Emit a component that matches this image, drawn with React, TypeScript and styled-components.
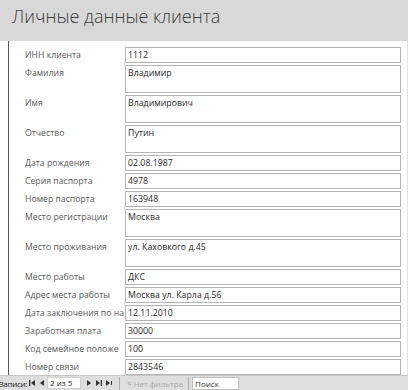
import styled, { createGlobalStyle } from 'styled-components';

const GlobalStyle = createGlobalStyle`
	html, body {
		margin: 0;
		padding: 0;
		width: 408px;
		height: 390px;
		overflow: hidden;
		background: #fff;
		font-family: 'Open Sans', 'Noto Sans', sans-serif;
	}
`;

interface IField {
	label: string;
	value: string;
	tall?: boolean;
}

// labels are cut by the column as in the form view
const fields: IField[] = [
	{ label: 'ИНН клиента', value: '1112' },
	{ label: 'Фамилия', value: 'Владимир', tall: true },
	{ label: 'Имя', value: 'Владимирович', tall: true },
	{ label: 'Отчество', value: 'Путин', tall: true },
	{ label: 'Дата рождения', value: '02.08.1987' },
	{ label: 'Серия паспорта', value: '4978' },
	{ label: 'Номер паспорта', value: '163948' },
	{ label: 'Место регистрации', value: 'Москва', tall: true },
	{ label: 'Место проживания', value: 'ул. Каховкого д.45', tall: true },
	{ label: 'Место работы', value: 'ДКС' },
	{ label: 'Адрес места работы', value: 'Москва ул. Карла д.56' },
	{ label: 'Дата заключения по на', value: '12.11.2010' },
	{ label: 'Заработная плата', value: '30000' },
	{ label: 'Код семейное положе', value: '100' },
	{ label: 'Номер связи', value: '2843546' },
];

function NavIcon({ kind }: { kind: 'first' | 'prev' | 'next' | 'last' | 'new' }) {
	return (
		<svg width="8" height="8" viewBox="0 0 8 8">
			{kind === 'first' && (
				<>
					<rect x="1" y="1" width="1.3" height="6" fill="#333" />
					<polygon points="7,1 7,7 3,4" fill="#333" />
				</>
			)}
			{kind === 'prev' && <polygon points="6,1 6,7 2,4" fill="#333" />}
			{kind === 'next' && <polygon points="2,1 2,7 6,4" fill="#333" />}
			{kind === 'last' && (
				<>
					<polygon points="1,1 1,7 5,4" fill="#333" />
					<rect x="5.7" y="1" width="1.3" height="6" fill="#333" />
				</>
			)}
			{kind === 'new' && (
				<>
					<polygon points="1,1 1,7 5,4" fill="#333" />
					<rect x="6" y="2" width="1" height="4" fill="#333" />
				</>
			)}
		</svg>
	);
}

function FilterIcon() {
	return (
		<svg width="10" height="9" viewBox="0 0 10 9">
			<polygon points="1,1 8,1 5.5,4.5 5.5,8 3.5,7 3.5,4.5" fill="#c4c4c4" stroke="#aaa" strokeWidth="0.6" />
			<path d="M6.5 5.5 L9 8 M9 5.5 L6.5 8" stroke="#b55" strokeWidth="0.9" />
		</svg>
	);
}

function App() {
	return (
		<Page>
			<GlobalStyle />
			<Header>Личные данные клиента</Header>
			<Body>
				<Selector />
				<Form>
					{fields.map((f) => (
						<Row key={f.label} $tall={f.tall}>
							<Label>{f.label}</Label>
							<ValueBox>{f.value}</ValueBox>
						</Row>
					))}
				</Form>
				<Edge />
			</Body>
			<NavBar>
				<NavText>Записи:</NavText>
				<NavBtn>
					<NavIcon kind="first" />
				</NavBtn>
				<NavBtn>
					<NavIcon kind="prev" />
				</NavBtn>
				<Counter>2 из 5</Counter>
				<NavBtn>
					<NavIcon kind="next" />
				</NavBtn>
				<NavBtn>
					<NavIcon kind="last" />
				</NavBtn>
				<NavBtn>
					<NavIcon kind="new" />
				</NavBtn>
				<Divider />
				<FilterText>
					<FilterIcon />
					Нет фильтра
				</FilterText>
				<Divider />
				<Search>Поиск</Search>
			</NavBar>
		</Page>
	);
}

const Page = styled.div`
	width: 408px;
	height: 390px;
	display: flex;
	flex-flow: column nowrap;
	overflow: hidden;
`;
const Header = styled.div`
	flex: 0 0 41px;
	box-sizing: border-box;
	background: #d8d8d8;
	padding: 4px 0 0 12px;
	font-family: 'Open Sans', sans-serif;
	font-size: 18px;
	font-weight: 300;
	color: #3a3a3a;
`;
const Body = styled.div`
	flex: 1 1 auto;
	display: flex;
	flex-flow: row nowrap;
	min-height: 0;
`;
const Selector = styled.div`
	flex: 0 0 8px;
	background: #fff;
	border-right: 1px solid #5a5a5a;
`;
const Edge = styled.div`
	flex: 0 0 1px;
	margin-left: 4px;
	background: #e4e4e4;
`;
const Form = styled.div`
	flex: 1 1 auto;
	display: flex;
	flex-flow: column nowrap;
	gap: 2px;
	padding: 6px 0 0 16px;
`;
const Row = styled.div<{ $tall?: boolean }>`
	display: grid;
	grid-template-columns: 100px 276px;
	height: ${(p) => (p.$tall ? '28px' : '16px')};
	flex: 0 0 auto;
`;
const Label = styled.div`
	font-size: 8.7px;
	line-height: 16px;
	color: #5a5a5a;
	white-space: nowrap;
	overflow: hidden;
`;
const ValueBox = styled.div`
	box-sizing: border-box;
	border: 1px solid #b4b4b4;
	background: #fff;
	padding: 0 0 0 2px;
	font-size: 8.8px;
	line-height: 14px;
	color: #2a2a2a;
	white-space: nowrap;
	overflow: hidden;
`;
const NavBar = styled.div`
	flex: 0 0 15px;
	box-sizing: border-box;
	display: flex;
	flex-flow: row nowrap;
	align-items: center;
	background: #dedede;
	border-top: 1px solid #c8c8c8;
	font-size: 8px;
	color: #222;
`;
const NavText = styled.span`
	flex: 0 0 28px;
	margin-left: -1px;
	font-size: 8px;
	letter-spacing: -0.3px;
	white-space: nowrap;
`;
const NavBtn = styled.span`
	display: flex;
	align-items: center;
	justify-content: center;
	width: 10px;
	height: 12px;
`;
const Counter = styled.span`
	box-sizing: border-box;
	width: 34px;
	height: 12px;
	margin: 0 3px 0 0;
	padding-left: 2px;
	background: #fff;
	border: 1px solid #d0d0d0;
	line-height: 10px;
`;
const Divider = styled.span`
	width: 1px;
	height: 13px;
	background: #b0b0b0;
	margin: 0 7px 0 5px;
`;
const FilterText = styled.span`
	display: flex;
	align-items: center;
	gap: 2px;
	width: 56px;
	color: #a8a8a8;
	white-space: nowrap;
`;
const Search = styled.span`
	box-sizing: border-box;
	width: 47px;
	height: 13px;
	margin-left: -4px;
	padding-left: 2px;
	background: #fff;
	border: 1px solid #c0c0c0;
	line-height: 11px;
	color: #333;
`;

export default App;
